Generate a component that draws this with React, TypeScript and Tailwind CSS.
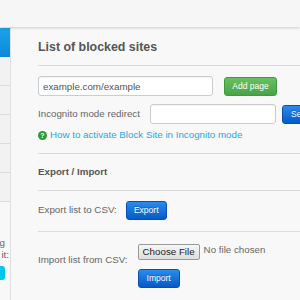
const blueBtn =
  'shrink-0 h-[19px] rounded-[3px] border border-[#0a4fb0] bg-gradient-to-b from-[#2a8cec] to-[#0559c9] text-white text-[8.5px] leading-none [text-shadow:0_-1px_0_rgba(0,0,0,0.25)]';

const SideItem = ({ active }: { active?: boolean }) =>
  active ? (
    <div className="h-[29px] bg-gradient-to-b from-[#1aa3ea] to-[#0b89d6]" />
  ) : (
    <div className="h-[29px] bg-[#f2f2f2] border-b border-[#dcdcdc]" />
  );

const App = () => {
  return (
    <div className="w-[300px] h-[300px] overflow-hidden bg-[#f8f8f8] text-[#666] font-['Liberation_Sans',Arial,sans-serif] text-[9.75px]">
      <div className="relative z-10 h-[27px] bg-[#f6f6f6] shadow-[0_1px_3px_rgba(0,0,0,0.18)]" />

      <div className="flex h-[273px]">
        {/* sidebar, mostly off screen */}
        <div className="w-[11px] shrink-0 overflow-hidden border-r border-[#e0e0e0] pt-[1px]">
          <SideItem active />
          <SideItem />
          <SideItem />
          <SideItem />
          <SideItem />
          <SideItem />
          <div className="mt-[35px] flex flex-col items-end">
            <div className="flex w-full justify-end pr-[5px]">
              <span className="shrink-0 whitespace-nowrap leading-[12px]">If you like using</span>
            </div>
            <div className="flex w-full justify-end pr-[1px]">
              <span className="shrink-0 whitespace-nowrap leading-[12px]">Block Site, rate it:</span>
            </div>
            <div className="mt-[5px] flex w-full justify-end pr-[5px]">
              <button className="shrink-0 w-[60px] h-[14px] rounded-[3px] bg-[#00c6ef] text-white text-[8.5px]">
                Rate
              </button>
            </div>
          </div>
        </div>

        {/* main */}
        <div className="flex-1 min-w-0 pl-[27px] pt-[12px]">
          <h1 className="h-[16px] leading-[16px] text-[12.4px] font-bold text-[#555] whitespace-nowrap">
            List of blocked sites
          </h1>
          <div className="mt-[10px] border-t border-[#dcdcdc]" />

          <div className="mt-[10px] flex items-center h-[20px]">
            <input
              readOnly
              value="example.com/example"
              className="shrink-0 w-[175px] h-[20px] rounded-[3px] border border-[#ccc] bg-white px-[4px] text-[9.75px] text-[#555] shadow-[inset_0_1px_1px_rgba(0,0,0,0.06)] outline-none"
            />
            <button className="ml-[11px] shrink-0 w-[53px] h-[19px] rounded-[3px] border border-[#3f9a3b] bg-gradient-to-b from-[#67c163] to-[#47a443] text-white text-[8.5px] leading-none">
              Add page
            </button>
          </div>

          <div className="mt-[8px] flex items-center h-[20px] whitespace-nowrap">
            <span className="shrink-0 w-[112px]">Incognito mode redirect</span>
            <input
              readOnly
              className="shrink-0 w-[126px] h-[20px] rounded-[3px] border border-[#ccc] bg-white shadow-[inset_0_1px_1px_rgba(0,0,0,0.06)] outline-none"
            />
            <button className={`${blueBtn} ml-[6px] w-[40px] text-left pl-[8px]`}>Set</button>
          </div>

          <div className="mt-[6px] flex items-center h-[10px] whitespace-nowrap">
            <span className="shrink-0 w-[9px] h-[9px] rounded-full bg-[#2b9a3a] text-white text-[7px] font-bold leading-[9px] text-center">
              ?
            </span>
            <a className="ml-[3px] text-[#2aa6e0] leading-[10px]">How to activate Block Site in Incognito mode</a>
          </div>

          <div className="mt-[13px] border-t border-[#dcdcdc]" />
          <h2 className="mt-[12px] h-[12px] leading-[12px] font-bold text-[#555]">Export / Import</h2>
          <div className="mt-[12px] border-t border-[#dcdcdc]" />

          <div className="flex items-center h-[40px] pb-[1px] whitespace-nowrap">
            <span className="shrink-0">Export list to CSV:</span>
            <button className={`${blueBtn} ml-[9px] w-[41px]`}>Export</button>
          </div>
          <div className="border-t border-[#dcdcdc]" />

          <div className="flex items-start pt-[12px] whitespace-nowrap">
            <span className="shrink-0 mt-[10px] leading-[12px]">Import list from CSV:</span>
            <div className="ml-[10px] flex flex-col items-start">
              <div className="flex items-start">
                <button className="shrink-0 h-[16px] px-[4px] rounded-[2px] border border-[#999] bg-gradient-to-b from-[#f6f6f6] to-[#dedede] text-[#222] text-[9.75px] leading-none">
                  Choose File
                </button>
                <span className="ml-[4px] leading-[11px] text-[#666]">No file chosen</span>
              </div>
              <button className={`${blueBtn} mt-[9px] w-[42px]`}>Import</button>
            </div>
          </div>
        </div>
      </div>
    </div>
  );
};

export default App;
